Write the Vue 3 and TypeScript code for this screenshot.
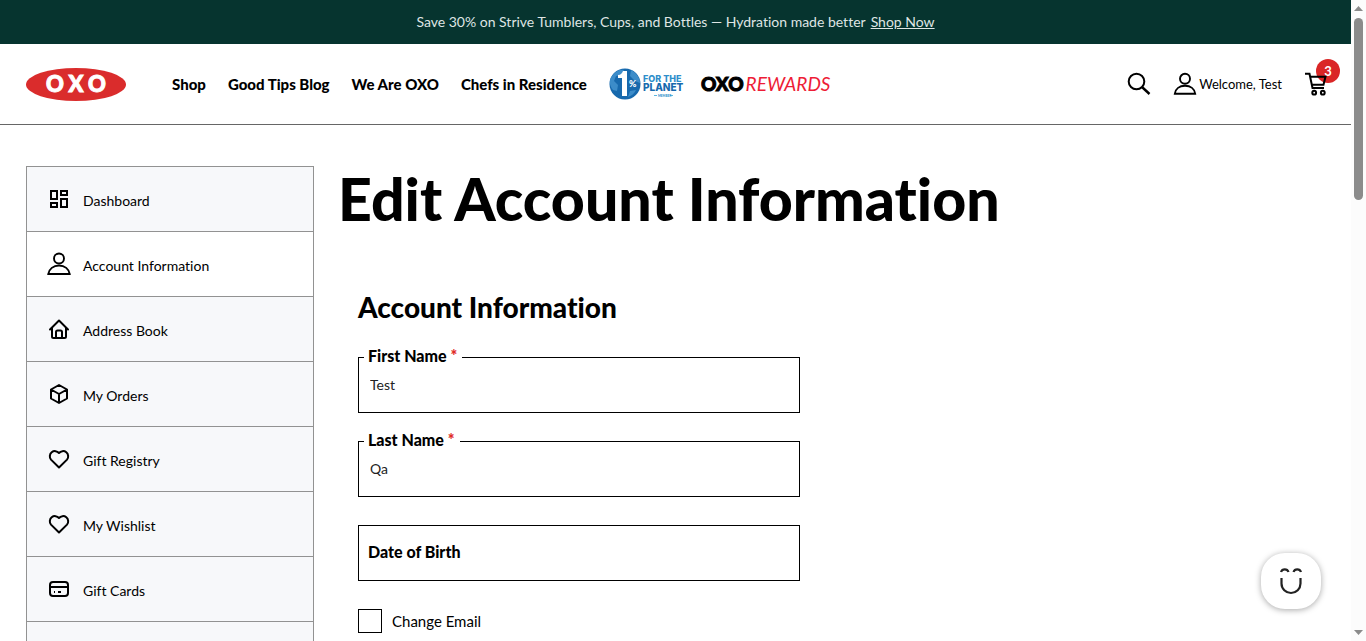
<script setup lang="ts">
import { ref } from 'vue'

interface MenuItem {
  label: string
  icon: 'dashboard' | 'user' | 'home' | 'box' | 'heart' | 'card'
}

const menu: MenuItem[] = [
  { label: 'Dashboard', icon: 'dashboard' },
  { label: 'Account Information', icon: 'user' },
  { label: 'Address Book', icon: 'home' },
  { label: 'My Orders', icon: 'box' },
  { label: 'Gift Registry', icon: 'heart' },
  { label: 'My Wishlist', icon: 'heart' },
  { label: 'Gift Cards', icon: 'card' },
]
const current = 'Account Information'
const links: string[] = ['Shop', 'Good Tips Blog', 'We Are OXO', 'Chefs in Residence']

const firstName = ref('Test')
const lastName = ref('Qa')
const birthDate = ref('')
const changeEmail = ref(false)
</script>

<template>
  <div class="window">
    <div class="page">
      <div class="promo">
        <span>Save 30% on Strive Tumblers, Cups, and Bottles — Hydration made better</span>
        <a href="#">Shop Now</a>
      </div>

      <header class="header">
        <a href="#" class="logo" aria-label="OXO home">
          <svg width="100" height="34" viewBox="0 0 100 34">
            <ellipse cx="50" cy="17.500" rx="50" ry="16.500" fill="#da2c2c" />
            <text text-anchor="middle" class="logo-text"><tspan x="29" y="25">O</tspan><tspan x="50" y="25">X</tspan><tspan x="71" y="25">O</tspan></text>
          </svg>
        </a>
        <nav class="nav">
          <a v-for="link in links" :key="link" href="#">{{ link }}</a>
          <a href="#" class="planet" aria-label="1% for the Planet">
            <svg width="70" height="34" viewBox="0 0 70 34" overflow="visible">
              <circle cx="16" cy="17" r="15.500" fill="#1769ad" />
              <path d="M3 9C7 3 12 2 15 3l-3 5-5 1-2 5 4 4-1 6-4-1C0 18 0 13 3 9zM22 3c5 2 9 8 9 13l-5-2-5-5zM21 24l6-1c-2 4-5 6-8 7z" fill="#3c8cc9" />
              <path d="M18 4v25h-5V11H9V8c3 0 4-2 5-4z" fill="#fff" />
              <text x="20" y="20" class="planet-percent">%</text>
              <text x="34" y="15" class="planet-top">FOR THE</text>
              <text x="34" y="24" class="planet-bottom">PLANET</text>
              <path d="M45 28.500h3M61 28.500h3" stroke="#5db7df" />
              <text x="49" y="30" class="planet-member">MEMBER</text>
            </svg>
          </a>
          <a href="#" class="rewards"><strong>OXO</strong><em>REWARDS</em></a>
        </nav>
        <div class="tools">
          <button type="button" class="icon-button" aria-label="Search">
            <svg width="24" height="24" viewBox="0 0 24 24" fill="none" stroke="#000" stroke-width="2">
              <circle cx="9.500" cy="9.500" r="7.800" />
              <path d="M15 15l7.500 7" stroke-width="2.400" />
            </svg>
          </button>
          <a href="#" class="welcome">
            <svg width="24" height="24" viewBox="0 0 24 24" fill="none" stroke="#000" stroke-width="1.900">
              <circle cx="12" cy="6.800" r="5" />
              <path d="M1.800 21.800c.6-5 4.700-8 10.200-8s9.600 3 10.200 8z" />
            </svg>
            <span>Welcome, Test</span>
          </a>
          <button type="button" class="icon-button cart" aria-label="Cart, 3 items">
            <span class="badge">3</span>
            <svg width="24" height="24" viewBox="0 0 24 24" fill="none" stroke="#000" stroke-width="2">
              <path d="M1 1.800h4.500l3 14.200H20M6.300 4.800h15.200l-2 8H8" />
              <circle cx="10.200" cy="20.700" r="1.900" />
              <circle cx="18.800" cy="20.700" r="1.900" />
            </svg>
          </button>
        </div>
      </header>

      <div class="content">
        <aside class="sidebar">
          <ul>
            <li v-for="item in menu" :key="item.label" :class="{ active: item.label === current }">
              <a href="#">
                <svg width="24" height="24" viewBox="0 0 24 24" fill="none" stroke="#000" stroke-width="2" stroke-linejoin="round">
                  <g v-if="item.icon === 'dashboard'" stroke-linejoin="miter">
                    <path d="M4 4h6v8H4zM14 4h6v4h-6zM4 16h6v4H4zM14 12h6v8h-6z" />
                  </g>
                  <g v-else-if="item.icon === 'user'" stroke-width="1.900" stroke-linejoin="miter">
                    <circle cx="12" cy="6.500" r="5" />
                    <path d="M1.300 22c.7-5 5-8.500 10.700-8.500S22 17 22.700 22z" />
                  </g>
                  <g v-else-if="item.icon === 'home'" stroke-linecap="round">
                    <path d="M3 12.500L12 3.500l9 9M5 11v8.500c0 1 .5 1.500 1.500 1.500h11c1 0 1.500-.5 1.500-1.500V11M9 21v-6c0-1 .5-1.500 1.500-1.500h3c1 0 1.500.5 1.500 1.500v6" />
                  </g>
                  <g v-else-if="item.icon === 'box'">
                    <path d="M12 3l8 4.500v9L12 21l-8-4.500v-9zM12 12l8-4.500M12 12v9M12 12L4 7.500" />
                  </g>
                  <g v-else-if="item.icon === 'heart'">
                    <path d="M20 12.600L12 20.500l-8-7.900A5 5 0 0 1 12 6a5 5 0 0 1 8 6.600z" />
                  </g>
                  <g v-else-if="item.icon === 'card'">
                    <rect x="3" y="5" width="18" height="14" rx="3" />
                    <path d="M3 10h18M7 15h1M11 15h3" />
                  </g>
                </svg>
                <span>{{ item.label }}</span>
              </a>
            </li>
            <li><a href="#" aria-label="More"></a></li>
          </ul>
        </aside>

        <main class="main">
          <h1>Edit Account Information</h1>
          <form class="form" @submit.prevent>
            <h2>Account Information</h2>
            <div class="field">
              <input id="first-name" v-model="firstName" type="text" required />
              <label for="first-name">First Name <b>*</b></label>
            </div>
            <div class="field">
              <input id="last-name" v-model="lastName" type="text" required />
              <label for="last-name">Last Name <b>*</b></label>
            </div>
            <div class="field resting">
              <input id="birth-date" v-model="birthDate" type="text" />
              <label for="birth-date">Date of Birth</label>
            </div>
            <div class="check">
              <input id="change-email" v-model="changeEmail" type="checkbox" />
              <label for="change-email">Change Email</label>
            </div>
          </form>
        </main>
      </div>
    </div>

    <div class="scrollbar" aria-hidden="true">
      <svg width="15" height="15" viewBox="0 0 15 15"><path d="M3 11l4.500-5 4.500 5z" fill="#8b8b8b" /></svg>
      <div class="track"><div class="thumb"></div></div>
      <svg width="15" height="15" viewBox="0 0 15 15"><path d="M3 4l4.500 5L12 4z" fill="#8b8b8b" /></svg>
    </div>

    <button type="button" class="chat" aria-label="Open chat">
      <svg width="24" height="28" viewBox="0 0 24 28" fill="none" stroke="#222" stroke-width="2.200">
        <path d="M2 5c1.200-3.500 6.300-3.500 7.500 0M14.500 5c1.200-3.500 6.300-3.500 7.500 0" />
        <path d="M2.500 11v5.500a9.500 9.500 0 0 0 19 0V11" />
      </svg>
    </button>
  </div>
</template>

<style>
body {
  overflow: hidden;
}
</style>

<style scoped>
* {
  box-sizing: border-box;
}

.window {
  display: grid;
  grid-template-columns: 1fr 15px;
  height: 100vh;
  overflow: hidden;
  color: #000;
  background: #fff;
  font: 14px/22px Lato, "Liberation Sans", sans-serif;
  font-variant-ligatures: none;
}

.page {
  min-width: 0;
  overflow: hidden;
}

a {
  color: inherit;
  text-decoration: none;
}

svg {
  display: block;
  flex: none;
}

.promo {
  display: flex;
  align-items: center;
  justify-content: center;
  gap: 5px;
  height: 44px;
  color: #dfe5e4;
  background: #06342f;
}

.promo a {
  text-decoration: underline;
}

.header {
  display: flex;
  align-items: center;
  height: 81px;
  padding: 0 23px 0 26px;
  border-bottom: 1px solid #666;
}

.logo-text {
  font-size: 22px;
  font-weight: 900;
  fill: #fff;
  stroke: #fff;
  stroke-width: 1px;
}

.nav {
  display: flex;
  align-items: center;
  gap: 22px;
  margin-left: 46px;
  font-size: 15px;
  font-weight: 900;
  white-space: nowrap;
}

.planet-percent {
  font-size: 9px;
  fill: #fff;
}

.planet-top,
.planet-bottom {
  font-family: Inter, sans-serif;
  font-size: 9px;
  font-weight: 800;
  fill: #2f8fcb;
}

.planet-bottom {
  font-size: 10px;
  fill: #1769ad;
}

.planet-member {
  font-size: 3px;
  fill: #2f8fcb;
}

.rewards {
  display: flex;
  gap: 2px;
  font-size: 19px;
}

.rewards strong {
  font-weight: 900;
  -webkit-text-stroke: 1px #000;
}

.rewards em {
  color: #ee1c36;
  font-weight: 400;
}

.tools {
  display: flex;
  align-items: center;
  gap: 22px;
  margin-left: auto;
}

.icon-button {
  padding: 0;
  background: none;
  border: 0;
}

.welcome {
  display: flex;
  align-items: center;
  gap: 2px;
  font-size: 13px;
}

.cart {
  position: relative;
}

.badge {
  position: absolute;
  top: -13px;
  left: 12px;
  width: 24px;
  height: 24px;
  color: #fff;
  background: #da2626;
  border-radius: 50%;
  font: 700 13px/24px Lato, sans-serif;
}

.cart svg {
  position: relative;
}

.content {
  display: grid;
  grid-template-columns: 288px 1fr;
  gap: 24px;
  padding: 41px 26px 0;
}

.sidebar ul {
  margin: 0;
  padding: 0;
  list-style: none;
  border: 1px solid #929292;
}

.sidebar li {
  height: 65px;
  background: #f7f8fa;
  border-bottom: 1px solid #929292;
}

.sidebar li.active {
  background: #fff;
}

.sidebar a {
  display: flex;
  align-items: center;
  gap: 12px;
  height: 100%;
  padding: 0 20px;
}

.sidebar span {
  padding-top: 4px;
}

h1 {
  margin: 0;
  font-size: 59px;
  font-weight: 900;
  line-height: 66px;
}

h2 {
  margin: 0 0 34px;
  font-size: 28px;
  font-weight: 900;
  line-height: 32px;
}

.form {
  max-width: 462px;
  margin-top: 59px;
  padding-left: 20px;
}

.field {
  position: relative;
  margin-bottom: 28px;
}

.field input {
  display: block;
  width: 100%;
  height: 56px;
  padding: 0 11px 2px;
  color: #222;
  background: #fff;
  border: 1px solid #000;
  border-radius: 0;
  font: inherit;
}

.field label {
  position: absolute;
  top: -12px;
  left: 6px;
  padding: 0 5px 0 4px;
  background: #fff;
  font-size: 16px;
  font-weight: 900;
}

.field.resting label {
  top: 16px;
}

.field b {
  color: #e02b27;
}

.check {
  display: flex;
  align-items: center;
  gap: 10px;
  font-size: 15px;
}

.check input {
  width: 24px;
  height: 24px;
  margin: 0;
  background: #fff;
  border: 1px solid #000;
  appearance: none;
}

.scrollbar {
  display: flex;
  flex-direction: column;
  background: #fcfcfc;
}

.track {
  flex: 1;
  padding: 3px 3px 0;
}

.thumb {
  width: 9px;
  height: 30%;
  background: #8b8b8b;
  border-radius: 5px;
}

.chat {
  position: fixed;
  right: 45px;
  bottom: 32px;
  display: grid;
  place-items: center;
  width: 60px;
  height: 56px;
  padding: 0;
  background: #fff;
  border: 0;
  border-radius: 24px;
  box-shadow: 0 1px 6px rgb(0 0 0 / 35%);
}
</style>
